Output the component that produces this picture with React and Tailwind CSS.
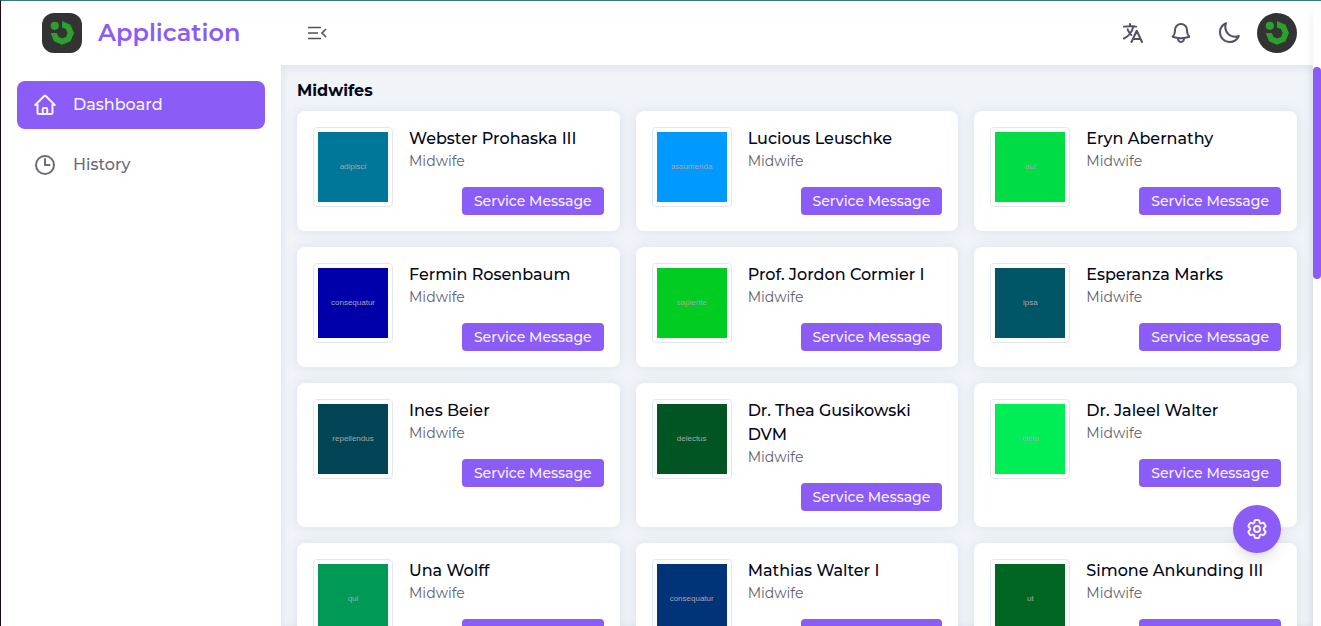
import {
  HiOutlineHome,
  HiOutlineClock,
  HiOutlineBell,
  HiOutlineMoon,
  HiOutlineCog6Tooth,
} from "react-icons/hi2";

const midwives = [
  { name: "Webster Prohaska III", word: "adipisci", color: "bg-[#007799]" },
  { name: "Lucious Leuschke", word: "assumenda", color: "bg-[#0099ff]" },
  { name: "Eryn Abernathy", word: "aut", color: "bg-[#00dd44]" },
  { name: "Fermin Rosenbaum", word: "consequatur", color: "bg-[#0000aa]" },
  { name: "Prof. Jordon Cormier I", word: "sapiente", color: "bg-[#00cc22]" },
  { name: "Esperanza Marks", word: "ipsa", color: "bg-[#005566]" },
  { name: "Ines Beier", word: "repellendus", color: "bg-[#004455]" },
  { name: "Dr. Thea Gusikowski DVM", word: "delectus", color: "bg-[#005522]" },
  { name: "Dr. Jaleel Walter", word: "dicta", color: "bg-[#00ee55]" },
  { name: "Una Wolff", word: "qui", color: "bg-[#009955]" },
  { name: "Mathias Walter I", word: "consequatur", color: "bg-[#003377]" },
  { name: "Simone Ankunding III", word: "ut", color: "bg-[#006622]" },
];

function Logo({ className }) {
  return (
    <svg viewBox="0 0 40 40" className={`size-10 bg-[#333333] ${className}`} aria-hidden="true">
      <circle cx="12.800" cy="12.800" r="4.100" fill="#2ca02c" />
      <path
        fill="#2ca02c"
        d="M20 8l8.500 3.700L32 20l-3.500 8.200L20 31.800l-8-3.600L8.700 20H14.800l1.700 3.800 3.500 1.700 3.900-1.600L25.600 20l-1.700-3.900L20 14.500Z"
      />
    </svg>
  );
}

function MenuFoldIcon() {
  return (
    <svg viewBox="0 0 24 24" className="size-6" fill="none" stroke="currentColor" strokeWidth="1.700" aria-hidden="true">
      <path d="M3 6.500h13M3 12h10M3 17.500h13M21 8l-4 4 4 4" />
    </svg>
  );
}

function LanguageIcon() {
  return (
    <svg
      viewBox="0 0 24 24"
      className="size-6"
      fill="none"
      stroke="currentColor"
      strokeWidth="2"
      strokeLinecap="round"
      strokeLinejoin="round"
      aria-hidden="true"
    >
      <path d="m10.500 21 5.250-11.250L21 21m-9-3h7.500M3 5.621a48.474 48.474 0 0 1 6-.371m0 0c1.120 0 2.233.038 3.334.114M9 5.250V3m3.334 2.364C11.176 10.658 7.690 15.080 3 17.502m9.334-12.138c.896.061 1.785.147 2.666.257m-4.589 8.495a18.023 18.023 0 0 1-3.827-5.802" />
    </svg>
  );
}

function NavItem({ icon: Icon, label, active }) {
  return (
    <a
      href="#"
      aria-current={active ? "page" : undefined}
      className={`flex h-12 items-center gap-4 rounded-lg px-4 font-medium ${active ? "bg-[#8b5cf6] text-violet-50" : "text-[#6b6b78]"}`}
    >
      <Icon className="size-6 stroke-2" />
      <span>{label}</span>
    </a>
  );
}

function MidwifeCard({ name, word, color }) {
  return (
    <article className="flex items-start gap-4 rounded-lg bg-white p-4 shadow-[0_0_12px_rgba(100,116,139,0.14)]">
      <div className="size-20 shrink-0 rounded-sm border border-slate-200 p-1">
        <div
          className={`flex h-full items-center justify-center font-['Liberation_Sans',sans-serif] text-[8px] text-[#a8a8a8] ${color}`}
        >
          {word}
        </div>
      </div>
      <div className="flex min-w-0 flex-1 flex-col">
        <h3 className="font-medium text-[#020617]">{name}</h3>
        <p className="text-sm text-[#5f5f6b]">Midwife</p>
        <button type="button" className="mt-4 h-7 self-end rounded-sm bg-[#8b5cf6] px-3 text-sm font-medium text-violet-50">
          Service Message
        </button>
      </div>
    </article>
  );
}

export default function App() {
  return (
    <div className="relative flex h-screen overflow-hidden border-t border-l border-t-[#3a7b80] border-l-[#1c0a18] bg-white font-['Montserrat',Inter,sans-serif] text-base">
      <div className="flex min-w-0 flex-1 flex-col">
        <header className="z-10 flex h-16 shrink-0 items-center bg-white text-[#525063]">
          <a href="#" className="flex w-[280px] shrink-0 items-center gap-4 pl-10 text-[#8b5cf6]">
            <Logo className="ml-px rounded-xl" />
            <span className="text-2xl font-semibold">Application</span>
          </a>
          <button type="button" aria-label="Collapse menu" className="ml-6">
            <MenuFoldIcon />
          </button>
          <div className="ml-auto flex items-center gap-6 pr-4">
            <button type="button" aria-label="Language">
              <LanguageIcon />
            </button>
            <button type="button" aria-label="Notifications">
              <HiOutlineBell className="size-6 stroke-2" />
            </button>
            <div className="flex items-center gap-4">
              <button type="button" aria-label="Dark mode">
                <HiOutlineMoon className="size-6 stroke-2" />
              </button>
              <button type="button" aria-label="Account">
                <Logo className="rounded-full" />
              </button>
            </div>
          </div>
        </header>
        <div className="flex min-h-0 flex-1">
          <nav className="flex w-[280px] shrink-0 flex-col gap-3 p-4">
            <NavItem icon={HiOutlineHome} label="Dashboard" active />
            <NavItem icon={HiOutlineClock} label="History" />
          </nav>
          <main className="min-w-0 flex-1 overflow-hidden bg-[#f0f4f9] px-4 pt-3.5 shadow-[inset_0_2px_8px_rgba(100,116,139,0.14)]">
            <h2 className="font-bold text-[#020617]">Midwifes</h2>
            <div className="mt-2 grid grid-cols-3 gap-4">
              {midwives.map((m) => (
                <MidwifeCard key={m.name} {...m} />
              ))}
            </div>
          </main>
        </div>
      </div>
      <div className="z-20 w-2 shrink-0 bg-white pt-[66px] shadow-[0_10px_10px_rgba(100,116,139,0.14)]">
        <div className="h-[38%] rounded-full bg-[#8b5cf6]" />
      </div>
      <button
        type="button"
        aria-label="Settings"
        className="absolute right-10 bottom-[73px] flex size-12 items-center justify-center rounded-full bg-[#8b5cf6] text-violet-50 shadow-lg"
      >
        <HiOutlineCog6Tooth className="size-6 stroke-2" />
      </button>
    </div>
  );
}
